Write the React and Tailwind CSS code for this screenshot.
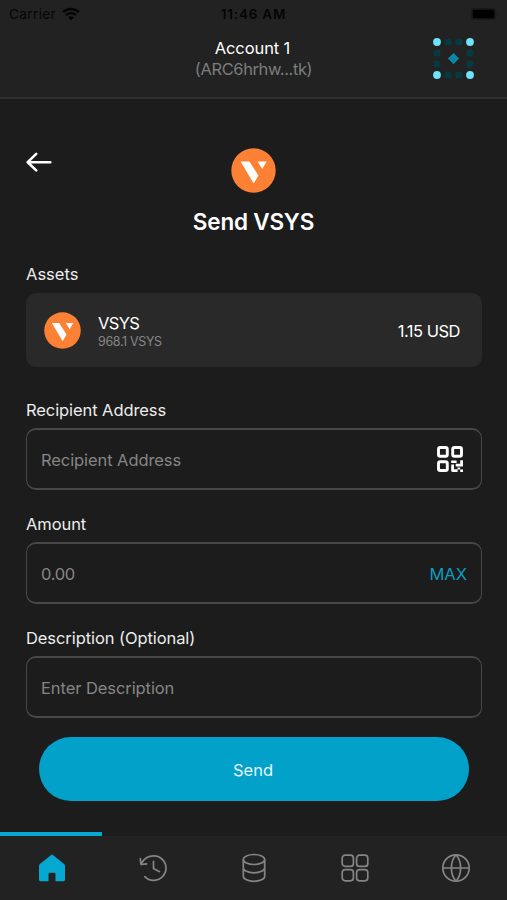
import React, { useState } from 'react';

const VsysLogo = ({ className }) => (
    <svg viewBox="0 0 44 44" className={className}>
        <circle cx="22" cy="22" r="21.7" fill="#fd8135" />
        <path d="M9.4 13.2h8.600l8.800 13.600-4.600 8z" fill="#fff" />
        <path d="M26 13.200h8.800l-4.300 7.400z" fill="#fff" />
    </svg>
);

const WifiIcon = () => (
    <svg viewBox="0 0 18 14" className="w-[18px] h-[14px]" fill="none" stroke="#050505">
        <path d="M1.1 5.2a11.4 11.4 0 0 1 15.8 0" strokeWidth="2.5" />
        <path d="M4 8.2a7.2 7.2 0 0 1 10 0" strokeWidth="2.3" />
        <path d="M9 13.4L6.2 10.5a4 4 0 0 1 5.6 0z" fill="#050505" stroke="none" />
    </svg>
);

const BatteryIcon = () => (
    <svg viewBox="0 0 30 14" className="w-[30px] h-[14px]">
        <rect x="1" y="1" width="25" height="12" rx="3" fill="#191919" />
        <rect x="2.7" y="2.7" width="21.6" height="8.6" rx="2" fill="#000" />
        <path d="M27.5 5.5v3" stroke="#1a1a1a" strokeWidth="1.2" />
    </svg>
);

const brightDots = [[4, 4], [37, 4], [4, 37], [37, 37]];
const dimDots = [
    [15, 4], [26, 4], [4, 15], [4, 26],
    [37, 15], [37, 26], [15, 37], [26, 37],
];

const Avatar = () => (
    <svg viewBox="0 0 41 41" className="w-[41px] h-[41px]">
        {dimDots.map(([x, y]) => <circle key={`${x}-${y}`} cx={x} cy={y} r="3.6" fill="#063a43" />)}
        {brightDots.map(([x, y]) => <circle key={`${x}-${y}`} cx={x} cy={y} r="3.9" fill="#6ce5fb" />)}
        <path d="M20.5 15l5.6 5.6-5.6 5.6-5.6-5.6z" fill="#0c86a3" />
    </svg>
);

const ArrowLeft = () => (
    <svg viewBox="0 0 26 20" className="w-[26px] h-[20px]" fill="none" stroke="#fff" strokeWidth="2.6" strokeLinecap="round" strokeLinejoin="round">
        <path d="M24.3 10.2H1.7M10.2 1.8L1.7 10.2l8.5 8.2" />
    </svg>
);

const QrIcon = () => (
    <svg viewBox="0 0 28 28" className="w-[28px] h-[28px]" fill="none" stroke="#fff" strokeWidth="2.9">
        <rect x="2.5" y="2.5" width="8.8" height="8.8" rx="1.8" />
        <rect x="16.7" y="2.5" width="8.8" height="8.8" rx="1.8" />
        <rect x="2.5" y="16.7" width="8.8" height="8.8" rx="1.8" />
        <path d="M15.2 15.4h5.400v2.500h-5.400zM24.200 15.200h2.800v6.200h-7.300v-2.600h4.500zM15.200 19.600h2.800v4.600h3.600v2.800h-4.800q-1.600 0-1.600-1.600zM21.600 22.500h2.600v2h-2.600zM24.200 24.500h2.800v2.500h-2.800z" fill="#fff" stroke="none" />
    </svg>
);

const HomeIcon = () => (
    <svg viewBox="0 0 28 28" className="w-[28px] h-[28px]">
        <path d="M13.2.9a1.3 1.3 0 0 1 1.7 0l10.9 8.8q1.2 1 1.2 2.4v13.6q0 1.6-1.6 1.6h-7.9v-7.4q0-1.2-1.2-1.2h-4.6q-1.2 0-1.2 1.2v7.4H2.6Q1 27.3 1 25.7V12.1q0-1.4 1.2-2.4z" fill="#05a8d0" />
    </svg>
);

const HistoryIcon = () => (
    <svg viewBox="0 0 28 28" className="w-[28px] h-[28px]" fill="none" stroke="#858585" strokeWidth="1.7" strokeLinecap="round" strokeLinejoin="round">
        <path d="M2.4 9.500C5 4.5 9.500 1.800 14.700 1.800a12.300 12.300 0 1 1-8.900 20.800" />
        <path d="M1.3 4.500l.7 6 5.600-.7M14.500 7.400v7.200l6 3.100" />
    </svg>
);

const CoinsIcon = () => (
    <svg viewBox="0 0 28 30" className="w-[28px] h-[30px]" fill="none" stroke="#858585" strokeWidth="1.7">
        <ellipse cx="14" cy="6.5" rx="10.700" ry="5" />
        <path d="M3.3 6.5v16.8c0 2.8 4.8 5 10.7 5s10.7-2.2 10.7-5V6.5M3.3 14.8c0 2.8 4.8 5 10.7 5s10.7-2.2 10.7-5" />
    </svg>
);

const GridIcon = () => (
    <svg viewBox="0 0 28 28" className="w-[28px] h-[28px]" fill="none" stroke="#858585" strokeWidth="1.7">
        <rect x="1.2" y="1.2" width="11.2" height="11.2" rx="3" />
        <rect x="15.6" y="1.2" width="11.2" height="11.2" rx="3" />
        <rect x="1.2" y="15.6" width="11.2" height="11.2" rx="3" />
        <rect x="15.6" y="15.6" width="11.2" height="11.2" rx="3" />
    </svg>
);

const GlobeIcon = () => (
    <svg viewBox="0 0 30 30" className="w-[30px] h-[30px]" fill="none" stroke="#858585" strokeWidth="1.7">
        <circle cx="15" cy="15" r="13.2" />
        <path d="M1.8 15h26.4M15 1.8c-6.200 7-6.200 19.400 0 26.400M15 1.800c6.200 7 6.200 19.400 0 26.400" />
    </svg>
);

const tabs = [
    { id: 'home', icon: HomeIcon },
    { id: 'history', icon: HistoryIcon },
    { id: 'assets', icon: CoinsIcon },
    { id: 'apps', icon: GridIcon },
    { id: 'browser', icon: GlobeIcon },
];

const Field = ({ label, tracking, placeholder, value, onChange, children }) => (
    <div>
        <label className="block h-6 leading-6 text-[16.5px] tracking-[-0.08px] text-[#ececec]">{label}</label>
        <div className="mt-[6px] h-[62px] flex items-center justify-between rounded-[10px] border-x border-y-2 border-[#484848] px-[14px] pt-[3px]">
            <input
                value={value}
                onChange={onChange}
                placeholder={placeholder}
                className={`min-w-0 flex-1 bg-transparent text-[16.5px] text-white placeholder:text-[#858585] focus:outline-none ${tracking || 'tracking-[-0.08px]'}`}
            />
            {children}
        </div>
    </div>
);

const App = () => {
    const [recipient, setRecipient] = useState('');
    const [amount, setAmount] = useState('');
    const [description, setDescription] = useState('');

    return (
        <div className="w-full h-[900px] flex flex-col overflow-hidden bg-[#1c1c1c] font-['Inter','Liberation_Sans',sans-serif] text-white">
            <header className="h-[99px] shrink-0 bg-[#222] border-b-2 border-[#303030]">
                <div className="h-7 grid grid-cols-3 items-center px-[9px] text-[#050505]">
                    <div className="flex items-center gap-[6px] text-[13.5px] tracking-[0.4px]">
                        Carrier
                        <WifiIcon />
                    </div>
                    <div className="text-center text-[13.5px] font-semibold tracking-[0.8px] whitespace-nowrap">11:46 AM</div>
                    <div className="flex justify-end -mr-[2px]"><BatteryIcon /></div>
                </div>
                <div className="grid grid-cols-[1fr_auto_1fr] items-center px-[33px] pt-[8px]">
                    <span />
                    <div className="text-center text-[16.5px] leading-[21px]">
                        <p className="pt-[2px] pr-[2px] tracking-[-0.1px]">Account 1</p>
                        <p className="tracking-[-0.4px] text-[#7c7c7c]">(ARC6hrhw...tk)</p>
                    </div>
                    <div className="flex justify-end"><Avatar /></div>
                </div>
            </header>

            <main className="flex-1 pl-[26px] pr-[25px] pt-[49px]">
                <div className="grid grid-cols-[1fr_auto_1fr] pr-[2px]">
                    <button className="self-start justify-self-start mt-[4px]"><ArrowLeft /></button>
                    <VsysLogo className="w-[45px] h-[45px]" />
                    <span />
                </div>
                <h1 className="mt-[15px] h-7 leading-7 pr-px text-center text-[22.5px] tracking-[-0.2px] font-semibold">Send VSYS</h1>

                <p className="mt-[26px] h-6 leading-6 text-[16.5px] text-[#ececec]">Assets</p>
                <div className="mt-[7px] h-[74px] flex items-center rounded-[10px] bg-[#292929] pl-[18px] pr-[22px]">
                    <VsysLogo className="w-[37px] h-[37px]" />
                    <div className="ml-[17px] mt-[3px] flex-1">
                        <p className="text-[16.5px] leading-[20px] tracking-[-0.6px]">VSYS</p>
                        <p className="text-[12.5px] leading-[17px] tracking-[-0.35px] text-[#858585]">968.1 VSYS</p>
                    </div>
                    <span className="mt-[2px] text-[16.5px] tracking-[-0.5px]">1.15 USD</span>
                </div>

                <div className="mt-[31px] flex flex-col gap-[22px]">
                    <Field label="Recipient Address" placeholder="Recipient Address" value={recipient} onChange={(e) => setRecipient(e.target.value)}>
                        <button className="mr-[3px] -mt-[3px]"><QrIcon /></button>
                    </Field>
                    <Field label="Amount" tracking="tracking-[-0.3px]" placeholder="0.00" value={amount} onChange={(e) => setAmount(e.target.value)}>
                        <button onClick={() => setAmount('968.1')} className="text-[16.5px] text-[#109bbc]">MAX</button>
                    </Field>
                    <Field label="Description (Optional)" placeholder="Enter Description" value={description} onChange={(e) => setDescription(e.target.value)} />
                </div>

                <button className="mt-[19px] mx-[13px] w-[430px] h-[64px] pt-[2px] pr-[2px] rounded-full bg-[#02a1ca] text-[16.5px] text-[#e8f8fc]">Send</button>
            </main>

            <div className="h-1 shrink-0"><div className="w-[102px] h-full bg-[#05a8d0]" /></div>
            <nav className="h-[64px] shrink-0 grid grid-cols-5 items-center pl-px bg-[#222]">
                {tabs.map(({ id, icon: Icon }) => (
                    <button key={id} className="flex justify-center"><Icon /></button>
                ))}
            </nav>
        </div>
    );
};

export default App;
